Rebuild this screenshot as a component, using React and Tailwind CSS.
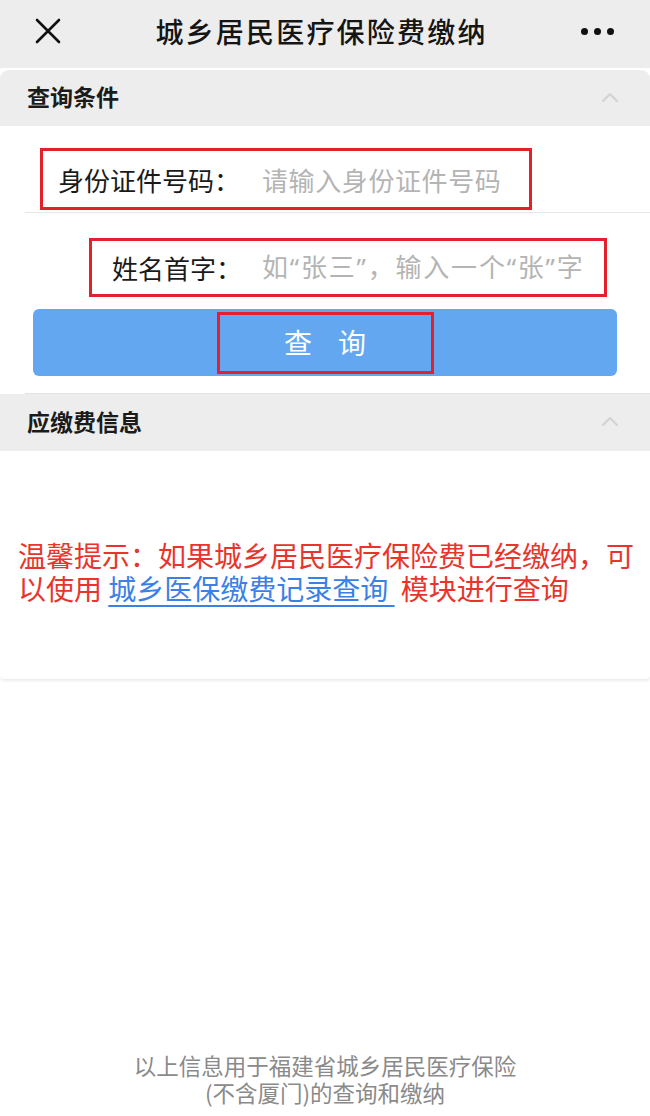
import React, { useState } from "react";

function Chevron() {
  return (
    <svg width="20" height="12" viewBox="0 0 20 12" fill="none">
      <path d="M3 10 L10 3 L17 10" stroke="#d2d2d2" strokeWidth="2" strokeLinecap="round" strokeLinejoin="round" />
    </svg>
  );
}

function App() {
  const [idNo, setIdNo] = useState("");
  const [name, setName] = useState("");

  return (
    <div className="min-h-[1116px] flex flex-col bg-white font-['Noto_Sans_CJK_SC','Noto_Sans',sans-serif]">
      {/* nav bar */}
      <div className="h-[68px] bg-[#ededed] flex items-center justify-between px-[34px] pb-[6px]">
        <svg width="28" height="28" viewBox="0 0 28 28" fill="none">
          <path d="M3 3 L25 25 M25 3 L3 25" stroke="#111" strokeWidth="2.6" strokeLinecap="round" />
        </svg>
        <h1 className="text-[28px] font-medium tracking-[2.2px] text-[#151515]">城乡居民医疗保险费缴纳</h1>
        <div className="flex items-center gap-[6px] pr-[2px]">
          <span className="w-[7px] h-[7px] rounded-full bg-[#111]"></span>
          <span className="w-[7px] h-[7px] rounded-full bg-[#111]"></span>
          <span className="w-[7px] h-[7px] rounded-full bg-[#111]"></span>
        </div>
      </div>

      {/* card */}
      <div className="mt-[2px] rounded-t-[9px] rounded-b-[4px] overflow-hidden bg-white shadow-[0_2px_3px_rgba(0,0,0,0.08)]">
        <div className="flex items-center justify-between h-[56px] bg-[#ededed] pl-[27px] pr-[30px] pb-[3px]">
          <span className="text-[23px] font-bold text-[#1b1b1b]">查询条件</span>
          <Chevron />
        </div>

        <div className="bg-white">
          {/* row 1 */}
          <div className="ml-[25px] pt-[22px] pb-[2px] border-b border-[#e6e6e6]">
            <div className="ml-[15px] w-[492px] h-[62px] border-[3px] border-[#e3202c] flex items-center pl-[15px]">
              <span className="text-[26px] text-[#1a1a1a] whitespace-nowrap">身份证件号码：</span>
              <input
                value={idNo}
                onChange={(e) => setIdNo(e.target.value)}
                placeholder="请输入身份证件号码"
                className="ml-[22px] flex-1 min-w-0 bg-transparent outline-none text-[26px] tracking-[0.6px] text-[#1a1a1a] placeholder:text-[#b4b4b4]"
              />
            </div>
          </div>

          {/* row 2 */}
          <div className="pt-[25px] pl-[89px]">
            <div className="w-[518px] h-[59px] border-[3px] border-[#e3202c] flex items-center pl-[20px]">
              <span className="text-[26px] text-[#1a1a1a] whitespace-nowrap">姓名首字：</span>
              <input
                value={name}
                onChange={(e) => setName(e.target.value)}
                placeholder="如“张三”，输入一个“张”字"
                className="ml-[20px] flex-1 min-w-0 bg-transparent outline-none text-[26px] tracking-[1.8px] font-['Noto_Sans','Noto_Sans_CJK_SC',sans-serif] text-[#1a1a1a] placeholder:text-[#b4b4b4]"
              />
            </div>
          </div>

          {/* button */}
          <div className="px-[33px] pt-[12px] pb-[17px]">
            <button className="w-full h-[67px] rounded-[6px] bg-[#63a7f1] flex items-center justify-center">
              <span className="w-[217px] h-[62px] border-[3px] border-[#e3202c] flex items-center justify-center text-white text-[28px] tracking-[26px] pl-[26px] pb-[2px]">
                查询
              </span>
            </button>
          </div>
        </div>

        <div className="ml-[25px] border-t border-[#e3e3e3]"></div>
        <div className="flex items-center justify-between h-[57px] bg-[#ededed] pl-[27px] pr-[30px] pb-[3px]">
          <span className="text-[23px] font-bold text-[#1b1b1b]">应缴费信息</span>
          <Chevron />
        </div>

        <div className="pl-[18px] pr-[6px] pt-[88px] pb-[74px]">
          <p className="text-[28px] leading-[33px] text-[#e8342c]">
            温馨提示：如果城乡居民医疗保险费已经缴纳，可以使用&nbsp;
            <a href="#" className="text-[#3a80e6] underline underline-offset-[5px] decoration-[1.5px]">
              城乡医保缴费记录查询&nbsp;
            </a>
            &nbsp;模块进行查询
          </p>
        </div>
      </div>

      {/* footer */}
      <div className="mt-auto pb-[10px] text-center text-[22.5px] leading-[27px] text-[#8a8a8a]">
        <p>以上信息用于福建省城乡居民医疗保险</p>
        <p>(不含厦门)的查询和缴纳</p>
      </div>
    </div>
  );
}

export default App;
